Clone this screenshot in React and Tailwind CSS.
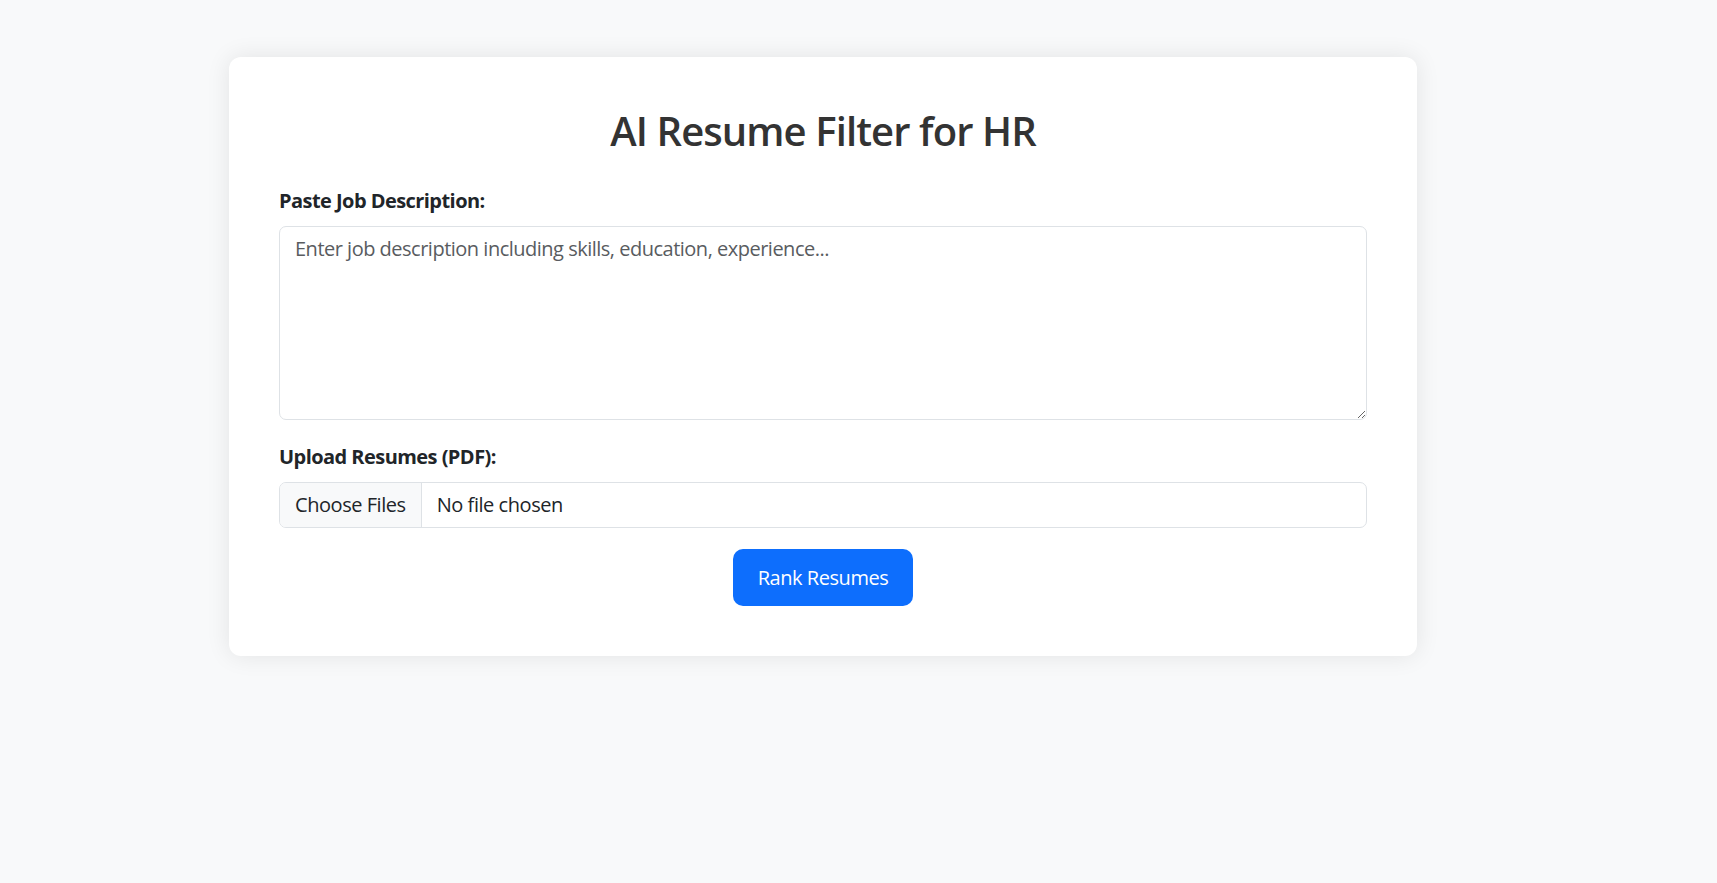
import React from 'react'

const font = { fontFamily: '"Segoe UI", "Open Sans", "Noto Sans", sans-serif' }

const App = () => {
  return (
    <div className="min-h-screen bg-[#f8f9fa] pt-[57px] pb-10" style={font}>
      <div className="ml-[229px] w-[1188px] rounded-[12px] bg-white p-[50px] shadow-[0_0_25px_rgba(0,0,0,0.09)]">
        <h2 className="mb-[31px] text-center text-[40px] leading-[48px] font-semibold tracking-[-0.9px] text-[#333333]">
          AI Resume Filter for HR
        </h2>

        <form onSubmit={(e) => e.preventDefault()} className="tracking-[-0.45px]">
          {/* job description */}
          <div className="mb-[22px]">
            <label htmlFor="jd" className="mb-[10px] block text-[20px] leading-[30px] font-bold tracking-[-0.55px] text-[#212529]">
              Paste Job Description:
            </label>
            <textarea
              id="jd"
              rows={6}
              placeholder="Enter job description including skills, education, experience..."
              className="block h-[194px] w-full rounded-[7px] border border-[#dee2e6] bg-white px-[15px] py-[7px] text-[20px] leading-[30px] tracking-[-0.5px] text-[#212529] outline-none placeholder:text-[#595c5f]"
            />
          </div>

          {/* resumes */}
          <div className="mb-[21px]">
            <label className="mb-[10px] block text-[20px] leading-[30px] font-bold tracking-[-0.55px] text-[#212529]">
              Upload Resumes (PDF):
            </label>
            <div className="flex h-[46px] w-full overflow-hidden rounded-[7px] border border-[#dee2e6] text-[20px] leading-[30px] text-[#212529]">
              <span className="flex items-center border-r border-[#dee2e6] bg-[#f8f9fa] px-[15px]">Choose Files</span>
              <span className="flex items-center px-[15px]">No file chosen</span>
            </div>
          </div>

          <div className="flex justify-center">
            <button
              type="submit"
              className="h-[57px] rounded-[10px] bg-[#0d6efd] px-[25px] text-[20px] leading-[30px] text-white"
            >
              Rank Resumes
            </button>
          </div>
        </form>
      </div>
    </div>
  )
}

export default App
